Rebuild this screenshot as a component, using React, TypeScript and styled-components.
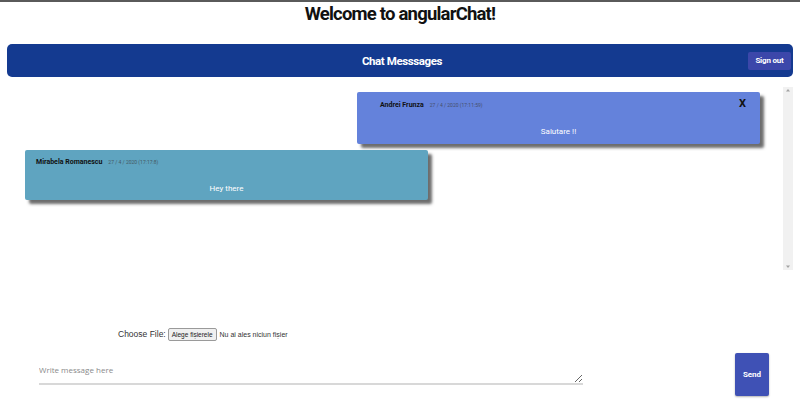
import styled, { createGlobalStyle } from 'styled-components';

const GlobalStyle = createGlobalStyle`
  html, body {
    margin: 0;
    padding: 0;
    background: #ffffff;
    font-family: Roboto, 'Liberation Sans', sans-serif;
  }
`;

type Message = {
  id: number;
  author: string;
  date: string;
  text: string;
  mine: boolean;
};

const messages: Message[] = [
  {
    id: 1,
    author: 'Andrei Frunza',
    date: '27 / 4 / 2020 (17:11:59)',
    text: 'Salutare !!',
    mine: true,
  },
  {
    id: 2,
    author: 'Mirabela Romanescu',
    date: '27 / 4 / 2020 (17:17:8)',
    text: 'Hey there',
    mine: false,
  },
];

const App = () => {
  return (
    <Page>
      <GlobalStyle />
      <Title>Welcome to angularChat!</Title>
      <Header>
        <span />
        <HeaderTitle>Chat Messsages</HeaderTitle>
        <SignOut>Sign out</SignOut>
      </Header>
      <ChatArea>
        <MessageList>
          {messages.map((msg) => (
            <Bubble key={msg.id} $mine={msg.mine}>
              <BubbleTop $mine={msg.mine}>
                <Author>{msg.author}</Author>
                <Stamp>{msg.date}</Stamp>
                {msg.mine && <Close>X</Close>}
              </BubbleTop>
              <BubbleText $mine={msg.mine}>{msg.text}</BubbleText>
            </Bubble>
          ))}
        </MessageList>
        <ScrollTrack>
          <svg width="10" height="6" viewBox="0 0 10 6">
            <path d="M3 4.5 L5 2 L7 4.5 Z" fill="#a3a3a3" />
          </svg>
          <svg width="10" height="6" viewBox="0 0 10 6">
            <path d="M3 1.5 L5 4 L7 1.5 Z" fill="#a3a3a3" />
          </svg>
        </ScrollTrack>
      </ChatArea>
      <Composer>
        <FileRow>
          <FileLabel>Choose File:</FileLabel>
          <FileButton>Alege fișierele</FileButton>
          <FileStatus>Nu ai ales niciun fișier</FileStatus>
        </FileRow>
        <InputRow>
          <MessageInput placeholder="Write message here" />
          <SendButton>Send</SendButton>
        </InputRow>
      </Composer>
    </Page>
  );
};

const Page = styled.div`
  width: 800px;
  height: 400px;
  overflow: hidden;
  border-top: 2px solid #5a5a5a;
  box-sizing: border-box;
`;
const Title = styled.h1`
  margin: 0;
  height: 42px;
  padding-top: 1px;
  box-sizing: border-box;
  text-align: center;
  font-size: 18.5px;
  font-weight: 700;
  letter-spacing: -0.8px;
  color: #111;
`;
const Header = styled.div`
  margin: 0 7px;
  height: 33px;
  background: #143a90;
  border-radius: 5px;
  display: grid;
  grid-template-columns: 1fr auto 1fr;
  align-items: center;
  padding: 0 2px 0 0;
`;
const HeaderTitle = styled.div`
  color: #fff;
  font-weight: 700;
  font-size: 11.5px;
  letter-spacing: -0.4px;
  padding-left: 6px;
`;
const SignOut = styled.button`
  justify-self: end;
  width: 43px;
  height: 18px;
  border: none;
  padding: 0;
  background: #3c47aa;
  color: #fff;
  font-family: Roboto, sans-serif;
  font-weight: 700;
  font-size: 8px;
  letter-spacing: -0.2px;
  border-radius: 2px;
`;
const ChatArea = styled.div`
  margin: 10px 7px 0 7px;
  height: 183px;
  display: flex;
`;
const MessageList = styled.div`
  flex: 1;
  padding: 5px 23px 0 18px;
  display: flex;
  flex-direction: column;
  gap: 6px;
`;
const ScrollTrack = styled.div`
  width: 10px;
  background: #f1f1f1;
  display: flex;
  flex-direction: column;
  justify-content: space-between;
`;
const Bubble = styled.div<{ $mine: boolean }>`
  flex: none;
  width: 403px;
  height: ${(p) => (p.$mine ? '52px' : '50px')};
  align-self: ${(p) => (p.$mine ? 'flex-end' : 'flex-start')};
  background: ${(p) => (p.$mine ? '#6482db' : '#5fa4c0')};
  box-shadow: 4px 4px 3px rgba(60, 60, 60, 0.75);
  border-radius: 2px;
  box-sizing: border-box;
  display: flex;
  flex-direction: column;
`;
const BubbleTop = styled.div<{ $mine: boolean }>`
  display: flex;
  align-items: baseline;
  gap: 6px;
  padding: ${(p) => (p.$mine ? '9px 10px 0 23px' : '8px 10px 0 11px')};
`;
const Author = styled.span`
  font-size: 7px;
  font-weight: 700;
  color: #111;
`;
const Stamp = styled.span`
  font-size: 5px;
  color: #3a3a3a;
  opacity: 0.7;
`;
const Close = styled.span`
  margin-left: auto;
  font-size: 11px;
  font-weight: 700;
  color: #111;
  align-self: flex-start;
  margin-top: -4px;
  padding-right: 4px;
`;
const BubbleText = styled.div<{ $mine: boolean }>`
  margin-top: auto;
  padding-bottom: ${(p) => (p.$mine ? '8px' : '7px')};
  text-align: center;
  color: #fff;
  font-size: 8px;
`;
const Composer = styled.div`
  margin-top: 57px;
`;
const FileRow = styled.div`
  display: flex;
  align-items: center;
  padding-left: 118px;
  height: 14px;
  font-family: 'Liberation Sans', Arial, sans-serif;
`;
const FileLabel = styled.span`
  font-size: 8.5px;
  color: #333;
  margin-right: 2px;
`;
const FileButton = styled.span`
  font-size: 6.5px;
  color: #222;
  border: 1px solid #9a9a9a;
  background: #f0f0f0;
  border-radius: 2px;
  padding: 2px 3px;
  margin-right: 3px;
`;
const FileStatus = styled.span`
  font-size: 7px;
  color: #333;
`;
const InputRow = styled.div`
  display: flex;
  align-items: flex-start;
  margin-top: 13px;
  padding-left: 39px;
`;
const MessageInput = styled.textarea`
  width: 544px;
  height: 31px;
  border: none;
  border-bottom: 2px solid #d8d8d8;
  padding: 10px 0 0 0;
  box-sizing: border-box;
  font-family: 'Open Sans', sans-serif;
  font-size: 8px;
  outline: none;
  resize: vertical;
  &::placeholder {
    color: #8a8a8a;
  }
`;
const SendButton = styled.button`
  margin-left: 152px;
  margin-top: -1px;
  width: 34px;
  height: 43px;
  border: none;
  background: #3f51b5;
  color: #fff;
  font-family: Roboto, sans-serif;
  font-weight: 700;
  font-size: 8px;
  border-radius: 2px;
  box-shadow: 0 1px 2px rgba(0, 0, 0, 0.3);
`;

export default App;
